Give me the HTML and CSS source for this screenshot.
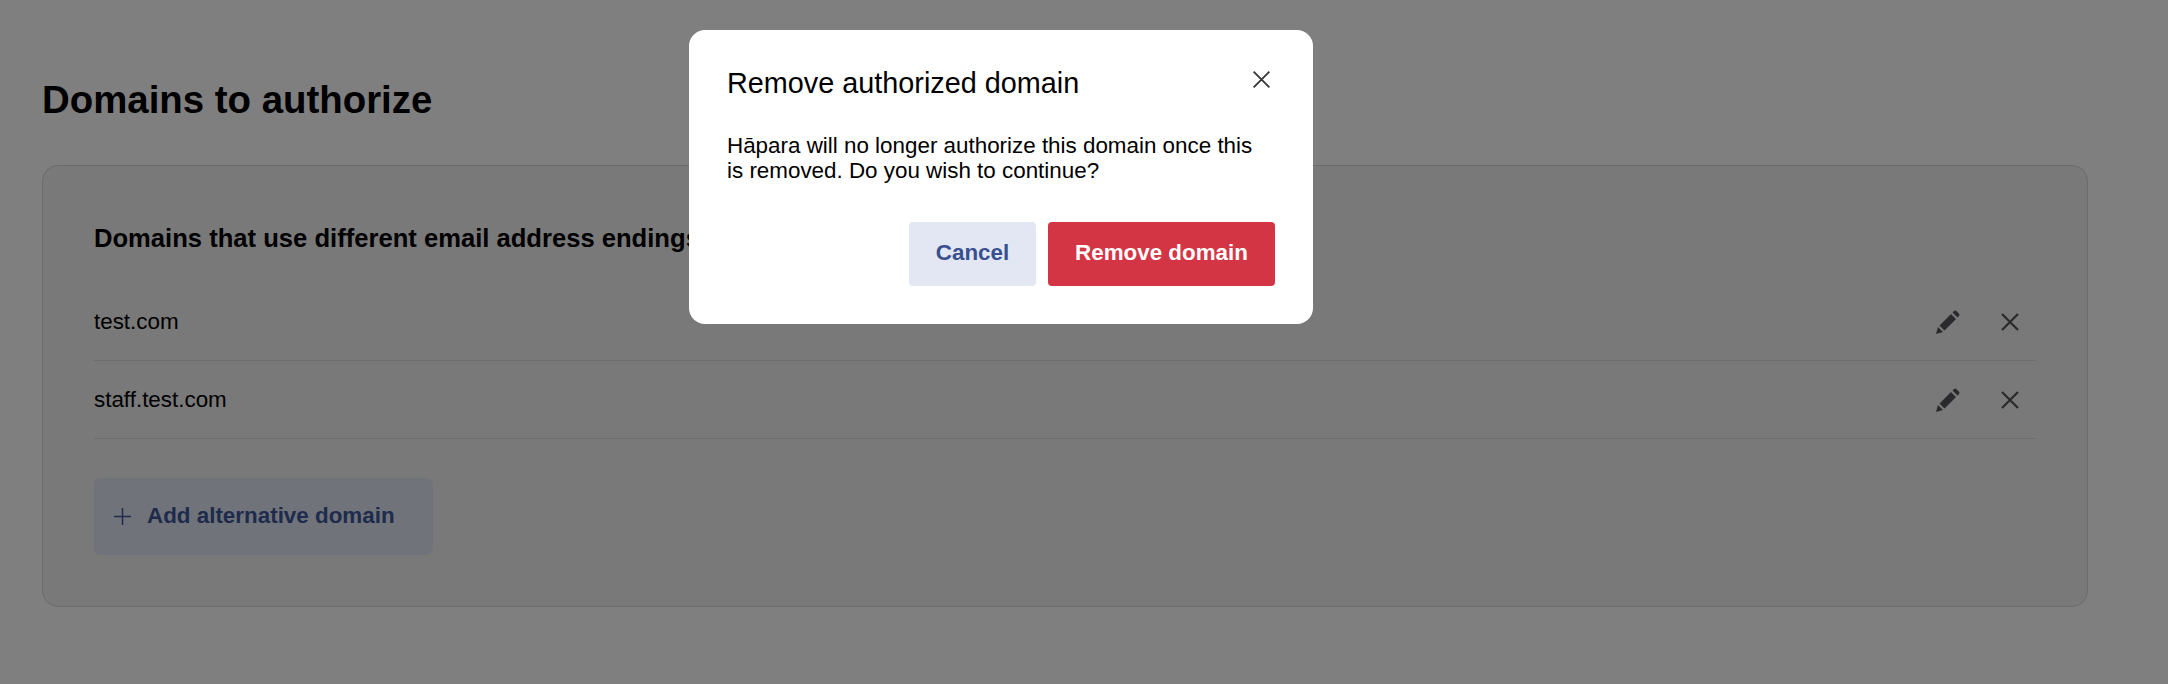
FILE: index.html
```html
<!DOCTYPE html>
<html lang="en">
<head>
<meta charset="utf-8">
<title>Domains to authorize</title>
<link rel="stylesheet" href="styles.css">
</head>
<body>
<main class="page">
  <h1 class="title">Domains to authorize</h1>
  <section class="card">
    <h2 class="card-title">Domains that use different email address endings</h2>
    <ul class="list">
      <li class="row">
        <span>test.com</span>
        <span class="actions">
          <svg class="icon" viewBox="0 0 24 24"><path d="M0 24l2-7 5 5zM3.5 15.5L15 4l5 5L8.500 20.500zM16.500 2.500l1.300-1.300a2 2 0 0 1 2.800 0l2.200 2.200a2 2 0 0 1 0 2.800L21.500 7.500z"/></svg>
          <svg class="icon" viewBox="0 0 24 24"><path class="cross" d="M4 4l16 16M20 4L4 20"/></svg>
        </span>
      </li>
      <li class="row">
        <span>staff.test.com</span>
        <span class="actions">
          <svg class="icon" viewBox="0 0 24 24"><path d="M0 24l2-7 5 5zM3.5 15.5L15 4l5 5L8.500 20.500zM16.500 2.500l1.300-1.300a2 2 0 0 1 2.800 0l2.200 2.200a2 2 0 0 1 0 2.800L21.500 7.500z"/></svg>
          <svg class="icon" viewBox="0 0 24 24"><path class="cross" d="M4 4l16 16M20 4L4 20"/></svg>
        </span>
      </li>
    </ul>
    <button class="add" type="button">
      <svg class="plus" viewBox="0 0 17 17"><path d="M8.500 0v17M0 8.500h17"/></svg>
      <span class="add-label">Add alternative domain</span>
    </button>
  </section>
</main>
<div class="overlay">
  <div class="modal" role="dialog">
    <div class="modal-head">
      <h2 class="modal-title">Remove authorized domain</h2>
      <svg class="modal-close" viewBox="0 0 24 24"><path class="cross" d="M3 3l18 18M21 3L3 21"/></svg>
    </div>
    <p class="modal-text">Hāpara will no longer authorize this domain once this is removed. Do you wish to continue?</p>
    <div class="modal-actions">
      <button class="btn btn-cancel" type="button">Cancel</button>
      <button class="btn btn-danger" type="button">Remove domain</button>
    </div>
  </div>
</div>
</body>
</html>
```
FILE: styles.css
```css
* { box-sizing: border-box; }
html, body { margin: 0; height: 100%; }
body {
  background: #fff;
  color: #000;
  font-family: "Liberation Sans", Arial, sans-serif;
  overflow: hidden;
}
.page { padding: 0 80px 0 42px; }
.title {
  margin: 0;
  padding-top: 75px;
  font-size: 38.400px;
  line-height: 50px;
  font-weight: 700;
}
.card {
  margin-top: 40px;
  height: 442px;
  width: 2046px;
  padding: 56px 51px 0;
  background: #f2f2f2;
  border: 1px solid #d8d8d8;
  border-radius: 16px;
}
.card-title {
  margin: 0;
  font-size: 25.600px;
  line-height: 32px;
  font-weight: 700;
}
.list { list-style: none; margin: 29px 0 0; padding: 0; }
.row {
  display: flex;
  align-items: center;
  justify-content: space-between;
  height: 78px;
  font-size: 22.400px;
  border-bottom: 1px solid #dcdcdc;
}
.actions { display: flex; gap: 38px; padding-right: 14px; }
.icon { width: 24px; height: 24px; fill: #54545a; display: block; }
.cross { fill: none; stroke: #54545a; stroke-width: 2.200; }
.add {
  display: flex;
  align-items: center;
  gap: 16px;
  margin-top: 39px;
  width: 339px;
  height: 77px;
  padding: 0 20px;
  border: 0;
  border-radius: 6px;
  background: #e0e7f2;
  color: #3f5699;
  font-family: inherit;
  font-size: 22.400px;
  font-weight: 700;
}
.add-label { margin-bottom: 2px; }
.plus { width: 17px; height: 17px; fill: none; stroke: #3f5699; stroke-width: 1.500; }
.overlay {
  position: fixed;
  inset: 0;
  background: rgba(0, 0, 0, 0.5);
}
.modal {
  position: absolute;
  left: 689px;
  top: 30px;
  width: 624px;
  height: 294px;
  padding: 33px 38px 38px;
  background: #fff;
  border-radius: 16px;
}
.modal-head { display: flex; justify-content: space-between; align-items: flex-start; }
.modal-title { margin: 0; font-size: 28.800px; line-height: 40px; font-weight: 400; }
.modal-close { width: 21px; height: 21px; margin-top: 6px; margin-right: 3px; }
.modal-close .cross { stroke: #3a3a3e; stroke-width: 2.200; }
.modal-text { margin: 30px 0 0; padding-right: 12px; font-size: 22.400px; line-height: 25px; }
.modal-actions { display: flex; justify-content: flex-end; gap: 12px; margin-top: 39px; }
.btn {
  height: 64px;
  padding: 0 0 2px;
  border: 0;
  border-radius: 4px;
  font-family: inherit;
  font-size: 22.400px;
  font-weight: 700;
}
.btn-cancel { width: 127px; background: #e3e7f3; color: #38508f; }
.btn-danger { width: 227px; background: #d43545; color: #fff; }
```
